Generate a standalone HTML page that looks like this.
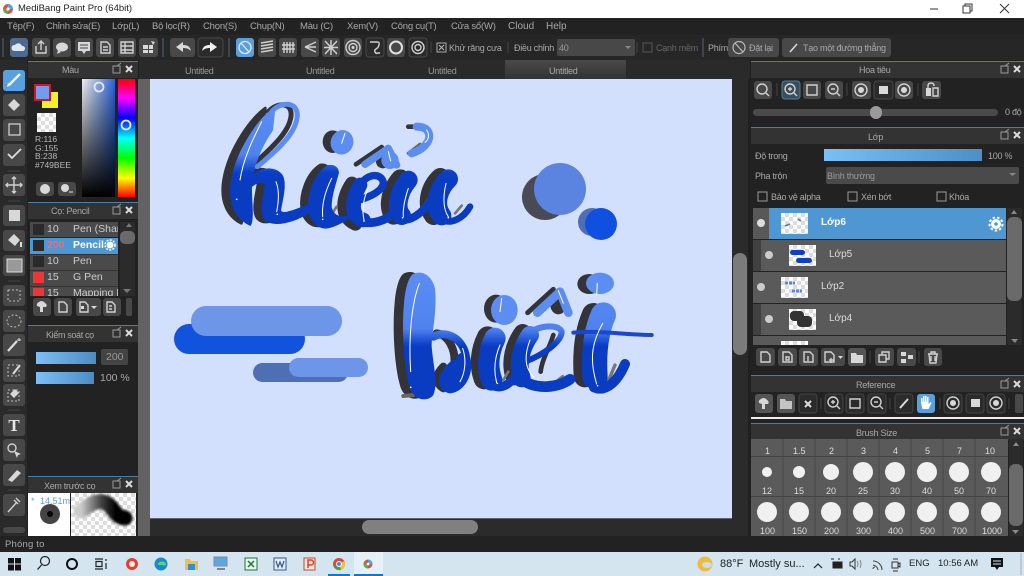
<!DOCTYPE html>
<html><head><meta charset="utf-8"><title>MediBang Paint Pro</title>
<style>
html,body{margin:0;padding:0;width:1024px;height:576px;overflow:hidden;background:#222}
body{position:relative;font-family:"Liberation Sans","Noto Sans CJK JP",sans-serif}
div{position:absolute}
.t{white-space:nowrap;font-size:9px;letter-spacing:-.25px;line-height:12px;color:#a8a8a8}
.m{font-size:9.5px;letter-spacing:-.2px;top:21px}
.n{font-size:9px;letter-spacing:0;color:#ddd}
.c{background-color:#fff;background-image:linear-gradient(45deg,#ddd 25%,transparent 25%,transparent 75%,#ddd 75%),linear-gradient(45deg,#ddd 25%,transparent 25%,transparent 75%,#ddd 75%);background-size:8px 8px;background-position:0 0,4px 4px}
.h{background:#333;border-top:1px solid #4c7f99;height:16px}
.r{left:753px;width:253px;height:31px;background:#5a5a5a}
svg{position:absolute;left:0;top:0}
.b{fill:#484848}.d{fill:#2b2b2b;stroke:#444}.a{fill:#5aa0de}
.i{fill:none;stroke:#d0d0d0;stroke-width:1.4}.f{fill:#d8d8d8}
</style></head><body>
<div style="left:0;top:0;width:1024px;height:18px;background:#fff"></div>
<div style="left:0;top:18px;width:1024px;height:17px;background:#222"></div>
<div style="left:0;top:35px;width:1024px;height:25px;background:#262626"></div>
<div style="left:0;top:60px;width:1024px;height:476px;background:#202020"></div>
<div style="left:139px;top:60px;width:611px;height:19px;background:#2a2a2a"></div>
<div style="left:505px;top:60px;width:121px;height:19px;background:linear-gradient(#4a4a4a,#333)"></div>
<div style="left:138px;top:79px;width:610px;height:457px;background:#626262"></div>
<div style="left:150px;top:79px;width:582px;height:439px;background:#d3e0fd"></div>
<div style="left:732px;top:79px;width:16px;height:441px;background:#2b2b2b"></div>
<div style="left:733px;top:253px;width:14px;height:102px;background:#7b7b7b;border-radius:7px"></div>
<div style="left:150px;top:519px;width:598px;height:17px;background:#2b2b2b"></div>
<div style="left:362px;top:520px;width:116px;height:14px;background:#808080;border-radius:7px"></div>
<div style="left:0;top:536px;width:1024px;height:16px;background:#222"></div>
<div style="left:0;top:552px;width:1024px;height:24px;background:#d4e5f0"></div>
<div style="left:354px;top:552px;width:29px;height:24px;background:#e6f1f7"></div>
<div style="left:328px;top:574px;width:22px;height:2px;background:#0a78d4"></div>
<div style="left:354px;top:574px;width:29px;height:2px;background:#0a78d4"></div>

<!-- left panels -->
<div style="left:0;top:60px;width:27px;height:476px;background:#2a2a2a"></div>
<div style="left:28px;top:61px;width:110px;height:475px;background:#222"></div>
<div class="h" style="left:28px;top:61px;width:110px"></div>
<div class="h" style="left:28px;top:202px;width:110px"></div>
<div class="h" style="left:28px;top:325px;width:110px"></div>
<div class="h" style="left:28px;top:476px;width:110px"></div>
<div style="left:82px;top:79px;width:33px;height:118px;background:linear-gradient(#0000 0,#000 100%),linear-gradient(90deg,#eee,#2a63d8)"></div>
<div style="left:118px;top:79px;width:17px;height:118px;background:linear-gradient(#f00,#f0f 16%,#00f 33%,#0ff 50%,#0f0 67%,#ff0 84%,#f00)"></div>
<div style="left:42px;top:92px;width:16px;height:16px;background:#f2f22a"></div>
<div style="left:34px;top:84px;width:13px;height:13px;background:#749bee;border:2px solid #d01820"></div>
<div class="c" style="left:37px;top:113px;width:19px;height:19px"></div>
<div style="left:30px;top:222px;width:88px;height:74px;overflow:hidden;background:#4a4a4a">
 <div style="left:0;top:16px;width:88px;height:16px;background:#4f97d3"></div>
 <div style="left:0;top:15px;width:88px;height:1px;background:#222"></div>
 <div style="left:0;top:32px;width:88px;height:1px;background:#333"></div>
 <div style="left:0;top:48px;width:88px;height:1px;background:#333"></div>
 <div style="left:0;top:64px;width:88px;height:1px;background:#333"></div>
 <div style="left:3px;top:2px;width:11px;height:11px;background:#2a2a2a"></div>
 <div style="left:3px;top:18px;width:11px;height:11px;background:#2a2a2a"></div>
 <div style="left:3px;top:34px;width:11px;height:11px;background:#2a2a2a"></div>
 <div style="left:3px;top:50px;width:11px;height:11px;background:#f03535"></div>
 <div style="left:3px;top:66px;width:11px;height:11px;background:#f03535"></div>
 <div class="t" style="left:17px;top:1px;color:#ccc;font-size:10.5px;letter-spacing:0">10</div>
 <div class="t" style="left:17px;top:17px;color:#f06a7a;font-size:10.5px;font-weight:bold;letter-spacing:0">200</div>
 <div class="t" style="left:17px;top:33px;color:#ccc;font-size:10.5px;letter-spacing:0">10</div>
 <div class="t" style="left:17px;top:49px;color:#ccc;font-size:10.5px;letter-spacing:0">15</div>
 <div class="t" style="left:17px;top:65px;color:#ccc;font-size:10.5px;letter-spacing:0">15</div>
 <div class="t" style="left:43px;top:1px;color:#ccc;font-size:10.5px;letter-spacing:0">Pen (Sharp)</div>
 <div class="t" style="left:43px;top:17px;color:#fff;font-size:10.5px;font-weight:bold;letter-spacing:0">Pencil</div>
 <div class="t" style="left:43px;top:33px;color:#ccc;font-size:10.5px;letter-spacing:0">Pen</div>
 <div class="t" style="left:43px;top:49px;color:#ccc;font-size:10.5px;letter-spacing:0">G Pen</div>
 <div class="t" style="left:43px;top:65px;color:#ccc;font-size:10.5px;letter-spacing:0">Mapping Pen</div>
</div>
<div style="left:120px;top:222px;width:15px;height:74px;background:#2b2b2b"></div>
<div style="left:120px;top:231px;width:15px;height:13px;background:#6a6a6a;border-radius:5px"></div>
<div style="left:36px;top:352px;width:60px;height:12px;background:linear-gradient(90deg,#7cc0f5,#4b8cc4)"></div>
<div style="left:101px;top:349px;width:27px;height:16px;background:#444;border-radius:2px"></div>
<div style="left:36px;top:372px;width:58px;height:12px;background:linear-gradient(90deg,#7cc0f5,#4b8cc4)"></div>
<div style="left:28px;top:493px;width:42px;height:43px;background:#fff"></div>
<div class="c" style="left:71px;top:493px;width:65px;height:43px"></div>

<!-- right panels -->
<div style="left:751px;top:61px;width:273px;height:475px;background:#222"></div>
<div class="h" style="left:751px;top:61px;width:273px"></div>
<div class="h" style="left:751px;top:127px;width:273px"></div>
<div class="h" style="left:751px;top:375px;width:273px"></div>
<div style="left:751px;top:417px;width:273px;height:2px;background:#eee"></div>
<div class="h" style="left:751px;top:423px;width:273px"></div>
<div style="left:753px;top:109px;width:245px;height:7px;background:#4a4a4a;border-radius:4px"></div>
<div style="left:870px;top:106px;width:12px;height:13px;background:#9a9a9a;border-radius:6px"></div>
<div style="left:824px;top:149px;width:158px;height:12px;background:linear-gradient(90deg,#78c0f6,#4b8fca)"></div>
<div style="left:826px;top:167px;width:193px;height:17px;background:#4a4a4a;border-radius:2px"></div>
<div class="r" style="top:208px;background:#4f97d3"></div>
<div style="left:753px;top:208px;width:16px;height:31px;background:#585858"></div>
<div class="r" style="top:240px"></div><div style="left:753px;top:240px;width:8px;height:31px;background:#404040"></div>
<div class="r" style="top:272px"></div>
<div class="r" style="top:304px"></div><div style="left:753px;top:304px;width:8px;height:31px;background:#404040"></div>
<div class="r" style="top:336px;height:9px"></div>
<div class="c" style="left:781px;top:213px;width:27px;height:21px"></div>
<div class="c" style="left:789px;top:245px;width:27px;height:21px"></div>
<div class="c" style="left:781px;top:277px;width:27px;height:21px"></div>
<div class="c" style="left:789px;top:309px;width:27px;height:21px"></div>
<div class="c" style="left:781px;top:341px;width:27px;height:4px"></div>
<div style="left:1007px;top:208px;width:15px;height:137px;background:#2b2b2b"></div>
<div style="left:1007px;top:217px;width:15px;height:84px;background:#6a6a6a;border-radius:6px"></div>
<div style="left:751px;top:439px;width:257px;height:97px;background:#5a5a5a"></div>
<div style="left:1009px;top:439px;width:14px;height:97px;background:#2b2b2b"></div>
<div style="left:1009px;top:464px;width:14px;height:62px;background:#6a6a6a;border-radius:6px"></div>

<svg width="1024" height="576" viewBox="0 0 1024 576">
<defs>
<linearGradient id="g1" gradientUnits="userSpaceOnUse" x1="0" y1="60" x2="0" y2="285"><stop offset="0" stop-color="#5c8df4"/><stop offset=".66" stop-color="#5083ee"/><stop offset=".9" stop-color="#0a3ec6"/><stop offset="1" stop-color="#0a3cc2"/></linearGradient>
<linearGradient id="g2" gradientUnits="userSpaceOnUse" x1="0" y1="40" x2="0" y2="265"><stop offset="0" stop-color="#5c8df4"/><stop offset=".74" stop-color="#4f82ee"/><stop offset=".96" stop-color="#0a3ec6"/><stop offset="1" stop-color="#0a3cc2"/></linearGradient>
<linearGradient id="st" x1="0" x2="1"><stop offset="0" stop-color="#ccc"/><stop offset=".45" stop-color="#444"/><stop offset=".8" stop-color="#000"/></linearGradient>
<filter id="sf" x="-40%" y="-150%" width="180%" height="400%"><feGaussianBlur stdDeviation="1.200"/></filter>
</defs>
<!-- title icon -->
<circle cx="8" cy="9" r="5" fill="#e0503a"/><path d="M8 4a5 5 0 0 1 5 5H8z" fill="#4aa8e0"/><path d="M3 9a5 5 0 0 0 5 5V9z" fill="#50b050"/><circle cx="8" cy="9" r="1.6" fill="#fff"/>
<path d="M930 9h8" stroke="#333" fill="none"/><path d="M963 6h7v7h-7zM965 6V4h7v7h-2" stroke="#333" fill="none"/><path d="M1000 4l9 9M1009 4l-9 9" stroke="#333" fill="none"/>
<!-- toolbar -->
<path d="M3 38v19M163 38v19M229 38v19M703 38v19" stroke="#456a80"/>
<rect x="10" y="38" width="18" height="19" rx="3" fill="#4a6a90"/><path d="M14 51a3 3 0 0 1 1-6 4 4 0 0 1 7 1 2.5 2.5 0 0 1 1 5z" fill="#dfe8f2"/>
<rect class="b" x="32" y="38" width="18" height="19" rx="3"/><path class="i" d="M36 46v7h10v-7M41 50v-9M38 44l3-3 3 3"/>
<rect class="b" x="53" y="38" width="18" height="19" rx="3"/><ellipse class="f" cx="62" cy="47" rx="6" ry="4.5"/><path class="f" d="M58 50l-1 4 4-2z"/>
<rect class="b" x="75" y="38" width="18" height="19" rx="3"/><path class="f" d="M78 42h12v9h-4l-2 3-2-3h-4z"/><path d="M80 45h8M80 48h8" stroke="#444"/>
<rect class="b" x="96" y="38" width="18" height="19" rx="3"/><path class="i" d="M101 42h6l3 3v8h-9zM103 47h5M103 50h5"/>
<rect class="b" x="118" y="38" width="18" height="19" rx="3"/><path class="i" d="M121 42h12v11h-12zM121 46h12M121 50h12M125 42v11"/>
<rect class="b" x="139" y="38" width="19" height="19" rx="3"/><path class="f" d="M143 45h5v4h-5zM149 45h4v4h-4zM143 50h5v3h-5zM149 50h4v3h-4zM151 41l4 1-2 3z"/>
<rect class="b" x="170" y="38" width="25" height="19" rx="3"/><path class="f" d="M176 47l7-5v3c4 0 7 1 8 6-2-2-4-3-8-3v4z"/>
<rect x="198" y="38" width="25" height="19" rx="3" fill="#2b2b2b" stroke="#484848"/><path fill="#f0f0f0" d="M217 47l-7-5v3c-4 0-7 1-8 6 2-2 4-3 8-3v4z"/>
<rect class="a" x="236" y="38" width="18" height="19" rx="3"/><circle cx="245" cy="47.5" r="6" fill="none" stroke="#dcecf8" stroke-width="1.3"/><path d="M241 43l8 9" stroke="#dcecf8" stroke-width="1.3"/>
<rect class="b" x="258" y="38" width="18" height="19" rx="3"/><path class="i" stroke-width="1" d="M261 43l12-2M261 46l12-2M261 49l12-2M261 52l12-2"/>
<rect class="b" x="279" y="38" width="18" height="19" rx="3"/><path class="i" d="M284 42v11M287 42v11M290 42v11M293 42v11M282 45h13M282 49h13"/>
<rect class="b" x="301" y="38" width="18" height="19" rx="3"/><path class="i" d="M305 47l11-5M305 47l11 0M305 47l11 5"/>
<rect class="b" x="322" y="38" width="18" height="19" rx="3"/><path class="i" d="M325 41l12 13M337 41l-12 13M331 40v15M324 47.500h14"/>
<rect class="b" x="344" y="38" width="18" height="19" rx="3"/><circle class="i" cx="353" cy="47.500" r="7"/><circle class="i" cx="353" cy="47.500" r="4"/><circle class="f" cx="353" cy="47.500" r="1.500"/>
<rect x="366" y="38" width="18" height="19" rx="3" fill="#2b2b2b" stroke="#484848"/><path class="i" d="M370 42h7q3 0 2 3t-3 4-1 3 3 1h2"/>
<rect class="b" x="387" y="38" width="18" height="19" rx="3"/><circle cx="396" cy="47.500" r="6" fill="none" stroke="#e0e0e0" stroke-width="2"/>
<rect x="409" y="38" width="18" height="19" rx="3" fill="#2b2b2b" stroke="#484848"/><circle class="i" cx="418" cy="47.500" r="6"/><circle class="i" cx="418" cy="47.500" r="3"/>
<path d="M431 42v11M508 42v11M637 42v11" stroke="#444"/>
<rect x="437" y="43" width="9" height="9" fill="none" stroke="#aaa"/><path d="M439 45l5 5M444 45l-5 5" stroke="#bbb"/>
<rect x="557" y="39" width="78" height="17" rx="2" fill="#484848"/><path d="M625 46h6l-3 3z" fill="#888"/>
<rect x="643" y="43" width="9" height="9" fill="none" stroke="#555"/>
<rect class="b" x="728" y="38" width="51" height="19" rx="3"/><circle cx="739" cy="47.500" r="6" fill="none" stroke="#bbb" stroke-width="1.200"/><path d="M735 43l8 9" stroke="#bbb" stroke-width="1.200"/>
<rect class="b" x="782" y="38" width="109" height="19" rx="3"/><path d="M790 52l7-8" stroke="#ddd" stroke-width="1.500"/>
<!-- left tools -->
<rect class="a" x="3" y="70" width="22" height="21" rx="3"/><path d="M9 85l11-11" stroke="#eaf3fb" stroke-width="2.500"/><path d="M7 87l1-4 3 2z" fill="#eaf3fb"/>
<rect class="b" x="3" y="94" width="22" height="22" rx="3"/><path class="f" d="M8 105l6-6 6 6-6 6z"/>
<rect class="b" x="3" y="119" width="22" height="22" rx="3"/><rect x="9" y="124" width="11" height="11" fill="none" stroke="#bbb" stroke-width="1.500"/>
<rect class="b" x="3" y="144" width="22" height="22" rx="3"/><path d="M8 154l4 4 9-9" fill="none" stroke="#ddd" stroke-width="1.800"/>
<rect class="b" x="3" y="174" width="22" height="22" rx="3"/><path class="i" d="M14 177v16M6 185h16M12 179l2-2 2 2M12 191l2 2 2-2M8 183l-2 2 2 2M20 183l2 2-2 2"/>
<rect class="b" x="3" y="205" width="22" height="21" rx="3"/><rect class="f" x="9" y="210" width="11" height="11"/>
<rect class="b" x="3" y="230" width="22" height="21" rx="3"/><path class="f" d="M8 240l6-6 6 6-5 6z"/><path d="M21 242v5" stroke="#ddd" stroke-width="2"/>
<rect class="b" x="3" y="255" width="22" height="21" rx="3"/><rect x="7" y="259" width="15" height="13" fill="#999" stroke="#ddd"/>
<rect class="b" x="3" y="285" width="22" height="21" rx="3"/><rect x="8" y="290" width="12" height="11" fill="none" stroke="#bbb" stroke-dasharray="2 2"/>
<rect class="b" x="3" y="310" width="22" height="22" rx="3"/><ellipse cx="14" cy="321" rx="7" ry="6" fill="none" stroke="#bbb" stroke-dasharray="2 2"/>
<rect class="b" x="3" y="334" width="22" height="22" rx="3"/><path d="M8 351l9-10" stroke="#ddd" stroke-width="2.200"/><path d="M19 338v3M17 340h4" stroke="#ddd"/>
<rect class="b" x="3" y="359" width="22" height="23" rx="3"/><rect x="8" y="365" width="11" height="11" fill="none" stroke="#bbb" stroke-dasharray="2 2"/><path d="M13 374l7-9" stroke="#ddd" stroke-width="2"/>
<rect class="b" x="3" y="384" width="22" height="22" rx="3"/><rect x="8" y="390" width="11" height="11" fill="none" stroke="#bbb" stroke-dasharray="2 2"/><path class="f" d="M10 394l5-5 4 4-5 5z"/>
<rect class="b" x="3" y="414" width="22" height="22" rx="3"/>
<rect class="b" x="3" y="439" width="22" height="22" rx="3"/><circle class="i" cx="12" cy="448" r="4"/><path class="f" d="M14 451l7 3-3 1-1 3z"/>
<rect class="b" x="3" y="464" width="22" height="22" rx="3"/><path class="f" d="M8 480l9-10 4 3-9 9z"/>
<rect class="b" x="3" y="494" width="22" height="22" rx="3"/><path class="i" d="M8 512l9-10M16 498l4 4M14 500l4 4"/>
<rect class="b" x="3" y="527" width="22" height="6" rx="3"/>
<path d="M8 171h12M8 201h12M8 281h12M8 410h12M8 490h12" stroke="#444"/>
<!-- panel head icons -->
<g fill="none" stroke="#999"><path d="M113 66h7v7h-7zM117 66l4-3"/><path d="M113 207h7v7h-7zM117 207l4-3"/><path d="M113 330h7v7h-7zM117 330l4-3"/><path d="M113 481h7v7h-7zM117 481l4-3"/><path d="M1001 66h7v7h-7zM1005 66l4-3"/><path d="M1001 132h7v7h-7zM1005 132l4-3"/><path d="M1001 381h7v7h-7zM1005 381l4-3"/><path d="M1001 428h7v7h-7zM1005 428l4-3"/></g>
<g stroke="#ddd" stroke-width="2"><path d="M126 66l6 6M132 66l-6 6M126 207l6 6M132 207l-6 6M126 330l6 6M132 330l-6 6M126 481l6 6M132 481l-6 6M1014 66l6 6M1020 66l-6 6M1014 132l6 6M1020 132l-6 6M1014 381l6 6M1020 381l-6 6M1014 428l6 6M1020 428l-6 6"/></g>
<!-- color panel marks -->
<circle cx="99" cy="87" r="4.500" fill="none" stroke="#e8e8e8" stroke-width="1.800"/>
<circle cx="126" cy="125" r="4.500" fill="none" stroke="#eee" stroke-width="1.800"/>
<rect class="b" x="36" y="182" width="18" height="14" rx="3"/><circle class="f" cx="45" cy="189" r="5"/>
<rect class="b" x="58" y="182" width="18" height="14" rx="3"/><circle class="f" cx="65" cy="188" r="4"/><path d="M69 192h4" stroke="#ddd"/>
<!-- brush list -->
<circle cx="110" cy="245" r="3.500" fill="#fff"/><circle cx="110" cy="245" r="5" fill="none" stroke="#fff" stroke-dasharray="2 1.300" stroke-width="1.500"/>
<path d="M127 227l3-4 3 4zM124 289h8l-4 4z" fill="#777" transform="translate(-1 0)"/>
<rect class="b" x="33" y="298" width="18" height="18" rx="3"/><path class="f" d="M37 306a3 3 0 0 1 2-4 4 4 0 0 1 6 1 2.500 2.500 0 0 1 1 4h-3v5h-3v-5z"/>
<rect class="b" x="54" y="298" width="18" height="18" rx="3"/><path class="i" d="M59 302h5l3 3v7h-8z"/>
<rect class="b" x="76" y="298" width="25" height="18" rx="3"/><path class="i" d="M80 302h5l3 3v7h-8z"/><path class="f" d="M81 306h3v3h-3zM91 306h6l-3 3z"/>
<rect class="b" x="103" y="298" width="18" height="18" rx="3"/><path class="i" d="M107 302h5l3 3v7h-8zM109 306h3M109 309h3"/>
<rect class="b" x="126" y="298" width="6" height="18" rx="2"/>
<!-- preview -->
<circle cx="50" cy="514" r="10" fill="#444"/><circle cx="50" cy="514" r="3" fill="#000"/>
<path d="M81 511C90 504 98 499 106 503C114 507 114 517 125 518" fill="none" stroke="url(#st)" stroke-width="15" stroke-linecap="round" filter="url(#sf)"/>
<!-- art: bars -->
<rect x="253" y="363" width="95" height="19" rx="9.500" fill="#4e6fb3"/>
<rect x="174" y="324" width="131" height="30" rx="15" fill="#1253dd"/>
<rect x="191" y="306" width="151" height="30" rx="15" fill="#6d95e8"/>
<rect x="289" y="358" width="79" height="19" rx="9.500" fill="#6d95e8"/>
<!-- art: circles -->
<circle cx="545" cy="197" r="23" fill="#4a4a55"/><circle cx="560" cy="189" r="26" fill="#5b84e0"/>
<circle cx="592" cy="222" r="14" fill="#4f6fb5"/><circle cx="601" cy="224" r="16" fill="#1050e0"/>

<!-- hieu (zoomed coordinates) -->
<g transform="translate(200 85) scale(.33333)" fill="none" stroke-linecap="round" stroke-linejoin="round">
 <g stroke="#333338" fill="#333338">
  <g transform="translate(-26 -3)" stroke-width="8">
   <path d="M222 72C170 110 105 210 95 300C90 350 105 395 150 418C160 395 150 340 152 300C158 240 180 185 215 135Z"/>
   <path d="M150 285C180 250 225 245 245 275C255 300 245 340 238 375C238 395 250 400 255 405C225 420 210 415 200 405C180 385 195 330 200 300C195 285 175 285 155 300Z"/>
  </g>
  <path fill="none" stroke-width="15" d="M205 80C235 48 282 52 272 100C262 150 205 195 165 235"/>
  <g transform="translate(-24 -4)">
   <path stroke-width="10" d="M385 245C345 270 325 330 330 375C335 410 360 430 385 425C395 405 390 385 390 365C390 330 405 290 412 262C410 248 398 243 385 245Z"/>
   <path fill="none" stroke-width="42" d="M480 300C450 345 445 400 490 420"/>
   <path fill="none" stroke-width="56" d="M625 285C595 320 585 370 605 395"/>
   <path fill="none" stroke-width="58" d="M745 282C715 310 700 360 725 395"/>
  </g>
  <ellipse stroke="none" cx="398" cy="170" rx="30" ry="34"/>
  <path fill="none" stroke-width="14" d="M468 238L545 186"/>
  <circle stroke="none" cx="548" cy="230" r="20"/>
  <path fill="none" stroke-width="14" d="M625 125H655"/>
  <path fill="none" stroke-width="10" stroke="#666" d="M660 178L625 205"/>
  <path fill="none" stroke-width="10" stroke="#666" d="M685 345L655 385"/>
  <path fill="none" stroke-width="8" stroke="#777" d="M785 362L765 385"/>
  <path fill="none" stroke-width="8" stroke="#777" d="M410 365L390 395"/>
 </g>
 <g stroke="url(#g1)" fill="url(#g1)">
  <path stroke-width="8" d="M222 72C170 110 105 210 95 300C90 350 105 395 150 418C160 395 150 340 152 300C158 240 180 185 215 135Z"/>
  <path fill="none" stroke-width="15" stroke="#5c8df4" d="M215 80C245 45 303 50 290 105C280 155 220 205 172 245"/>
  <path stroke-width="10" d="M150 285C180 250 225 245 245 275C255 300 245 340 238 375C240 395 270 385 320 365L325 380C280 410 225 420 200 405C180 385 195 330 200 300C195 285 175 285 155 300Z"/>
  <path stroke-width="10" d="M385 245C345 270 325 330 330 375C335 410 360 430 385 425C420 415 450 395 470 372L470 385C430 410 395 400 390 365C390 330 405 290 412 262C410 248 398 243 385 245Z"/>
  <path fill="none" stroke-width="22" d="M450 350C495 345 550 320 550 292C545 265 505 262 480 300"/>
  <path fill="none" stroke-width="44" d="M480 300C455 345 450 395 490 405"/>
  <path fill="none" stroke-width="26" d="M490 412C520 418 555 405 575 390"/>
  <path fill="none" stroke-width="56" d="M625 285C595 320 585 370 605 392"/>
  <path fill="none" stroke-width="24" d="M610 405C645 405 680 370 705 330"/>
  <path fill="none" stroke-width="58" d="M745 282C715 310 700 360 725 392"/>
  <path fill="none" stroke-width="20" d="M725 405C755 418 790 400 810 365"/>
 </g>
 <ellipse cx="426" cy="172" rx="34" ry="37" fill="#5c8df0" transform="rotate(20 426 172)"/>
 <path fill="none" stroke="#5c8df0" stroke-width="22" d="M495 238L565 190L590 240"/>
 <circle cx="570" cy="226" r="26" fill="#5c8df0"/>
 <path stroke-width="24" stroke="#5c8df0" d="M650 125C690 125 695 155 680 175C670 190 650 200 635 205"/>
 <g stroke="#fff" stroke-width="3">
  <path d="M185 110C160 160 130 220 120 285"/><path d="M228 290C240 320 235 355 230 380"/><path d="M395 280C375 320 365 360 368 395"/><path d="M435 145L425 175"/><path d="M565 200L572 228"/><path d="M625 310C615 340 608 370 610 395"/><path d="M738 295C730 330 728 370 745 395"/><path d="M680 135C690 150 685 165 675 172"/><path d="M505 310C490 340 485 375 492 405"/>
 </g>
 <g fill="#fff"><circle cx="110" cy="343" r="2.500"/><circle cx="232" cy="388" r="2.500"/><circle cx="368" cy="403" r="2.500"/><circle cx="492" cy="408" r="2.500"/><circle cx="608" cy="398" r="2.500"/><circle cx="745" cy="398" r="2.500"/></g>
</g>

<!-- biet (zoomed coordinates) -->
<g transform="translate(380 260) scale(.33333)" fill="none" stroke-linecap="round" stroke-linejoin="round">
 <g stroke="#333338" fill="#333338">
  <path stroke="none" transform="translate(-28 -2)" d="M100 42C125 30 155 45 165 85C172 150 155 220 155 260C160 320 175 370 160 405C145 425 105 425 90 385C70 320 65 200 72 130C75 90 85 50 100 42Z"/>
  <path fill="none" stroke-width="24" d="M170 220C205 225 230 270 222 320C218 350 210 365 205 372"/>
  <path fill="none" stroke-width="24" d="M190 320C170 340 160 365 190 385"/>
  <path fill="none" stroke-width="64" transform="translate(-22 -4)" d="M345 235C325 275 320 320 335 360"/>
  <ellipse stroke="none" cx="348" cy="146" rx="36" ry="42"/>
  <path fill="none" stroke-width="15" d="M443 158L520 88"/>
  <ellipse stroke="none" cx="535" cy="135" rx="24" ry="28"/>
  <path fill="none" stroke-width="54" transform="translate(-22 -6)" d="M450 225C425 260 410 310 425 355"/>
  <path fill="none" stroke-width="14" d="M520 225C510 260 485 300 482 335"/>
  <ellipse stroke="none" cx="628" cy="72" rx="36" ry="30"/>
  <path fill="none" stroke-width="68" transform="translate(-25 -2)" d="M665 165C645 210 635 270 640 350"/>
  <path fill="none" stroke-width="10" stroke="#777" d="M548 350L520 372"/>
  <path fill="none" stroke-width="10" stroke="#777" d="M705 315L680 375"/>
  <path fill="none" stroke-width="12" stroke="#666" d="M100 405L70 408"/>
  <path fill="none" stroke-width="8" stroke="#777" d="M385 335L370 360"/>
 </g>
 <g stroke="url(#g2)" fill="url(#g2)">
  <path stroke="none" d="M100 42C125 30 155 45 165 85C172 150 155 220 155 260C160 320 175 370 160 405C145 425 105 425 90 385C70 320 65 200 72 130C75 90 85 50 100 42Z"/>
  <path fill="none" stroke-width="24" d="M160 230C205 208 250 240 258 290"/>
  <path fill="none" stroke-width="44" d="M250 300C258 340 235 375 210 378C190 370 200 345 225 322"/>
  <path fill="none" stroke-width="64" d="M345 235C325 275 320 320 335 360"/>
  <path fill="none" stroke-width="26" d="M340 378C370 390 395 365 410 345"/>
  <path fill="none" stroke-width="54" d="M450 225C425 260 410 310 425 355"/>
  <path fill="none" stroke-width="18" d="M440 225C470 195 535 190 545 215C545 245 490 285 435 305"/>
  <path fill="none" stroke-width="32" d="M430 362C470 388 530 385 570 358"/>
  <path fill="none" stroke-width="76" d="M670 165C650 210 640 270 645 350"/>
  <path fill="none" stroke-width="30" d="M642 382C680 398 715 360 735 312"/>
  <path fill="none" stroke-width="12" stroke="#1848cc" d="M580 218C650 210 740 225 815 225"/>
 </g>
 <ellipse cx="373" cy="150" rx="40" ry="45" fill="#5c8df0"/>
 <path stroke-width="26" stroke="#5c8df0" d="M472 158L540 95L565 158"/>
 <ellipse cx="660" cy="70" rx="42" ry="32" fill="#5c8df0"/>
 <g stroke="#fff" stroke-width="3">
  <path d="M118 70C95 130 85 230 92 335"/><path d="M365 115L360 155"/><path d="M535 92L550 130"/><path d="M652 70L650 105"/><path d="M360 255C345 290 340 330 350 368"/><path d="M248 265C260 300 255 340 240 365"/><path d="M450 240C435 280 430 320 462 352"/><path d="M668 190C640 240 625 290 650 372"/>
 </g>
 <g fill="#fff"><circle cx="92" cy="382" r="2.500"/><circle cx="352" cy="370" r="2.500"/><circle cx="473" cy="358" r="2.500"/><circle cx="653" cy="377" r="2.500"/></g>
</g>

<!-- navigator -->
<rect class="b" x="754" y="81" width="18" height="18" rx="3"/><circle class="i" cx="762" cy="89" r="5"/><path class="i" d="M766 93l3 3"/>
<rect x="782" y="81" width="18" height="18" rx="3" fill="#3a4d5c" stroke="#4c7f99"/><circle class="i" cx="790" cy="89" r="5"/><path class="i" d="M794 93l3 3M788 89h4M790 87v4"/>
<rect class="b" x="803" y="81" width="18" height="18" rx="3"/><path class="i" d="M807 85h10v10h-10z"/>
<rect class="b" x="825" y="81" width="18" height="18" rx="3"/><circle class="i" cx="833" cy="89" r="5"/><path class="i" d="M837 93l3 3M831 89h4"/>
<rect class="b" x="852" y="81" width="19" height="18" rx="3"/><circle class="i" cx="861" cy="90" r="6"/><circle class="f" cx="861" cy="90" r="3"/>
<rect x="874" y="81" width="19" height="18" rx="3" fill="#2b2b2b" stroke="#484848"/><rect class="f" x="879" y="86" width="9" height="8"/>
<rect class="b" x="895" y="81" width="18" height="18" rx="3"/><circle class="i" cx="904" cy="90" r="6"/><circle class="f" cx="904" cy="90" r="3"/>
<rect class="b" x="922" y="81" width="19" height="18" rx="3"/><path class="f" d="M926 88h5v8h-5z"/><path class="i" d="M933 88h5v8h-5zM928 88v-2q0-3 3-3t3 3"/>
<path d="M777 83v13M847 83v13M918 83v13" stroke="#444"/>
<!-- layer panel -->
<path d="M1009 173h7l-3.500 3z" fill="#888"/>
<rect x="758" y="192" width="9" height="9" fill="none" stroke="#999"/><rect x="848" y="192" width="9" height="9" fill="none" stroke="#999"/><rect x="937" y="192" width="9" height="9" fill="none" stroke="#999"/>
<circle cx="761" cy="223" r="4" fill="#ddd"/><circle cx="769" cy="255" r="4" fill="#ccc"/><circle cx="761" cy="287" r="4" fill="#ccc"/><circle cx="769" cy="319" r="4" fill="#ccc"/>
<circle cx="996" cy="224" r="5" fill="#fff"/><circle cx="996" cy="224" r="6.500" fill="none" stroke="#fff" stroke-width="2" stroke-dasharray="2.500 2"/><circle cx="996" cy="224" r="1.800" fill="#4f97d3"/>
<path d="M785 226l5-2M798 219l3 2" stroke="#4f74d0" stroke-width="1.500"/>
<rect x="790" y="250" width="15" height="5" rx="2.500" fill="#1040c0"/><rect x="796" y="258" width="16" height="5" rx="2.500" fill="#1040c0"/>
<path d="M785 283h10M792 291h10" stroke="#5b84e0" stroke-width="3" stroke-dasharray="3 1"/>
<rect x="790" y="311" width="14" height="10" rx="4" fill="#333"/><rect x="797" y="316" width="15" height="11" rx="4" fill="#333"/>
<path d="M1011 214l3-4 3 4zM1011 339h7l-3 4z" fill="#888"/>
<rect class="b" x="756" y="348" width="19" height="18" rx="3"/><path class="i" d="M761 352h6l3 3v7h-9z"/>
<rect class="b" x="778" y="348" width="19" height="18" rx="3"/><path class="i" d="M783 352h6l3 3v7h-9zM786 357h3v3h-3z"/>
<rect class="b" x="799" y="348" width="19" height="18" rx="3"/><path class="i" d="M804 352h6l3 3v7h-9zM808 356v5"/>
<rect class="b" x="821" y="348" width="24" height="18" rx="3"/><path class="i" d="M825 352h6l3 3v7h-9zM829 360h5M831 358v5"/><path class="f" d="M838 356h5l-2.500 3z"/>
<rect x="848" y="348" width="18" height="18" rx="3" fill="#555"/><path class="f" d="M851 353h5l1 2h6v8h-12z"/>
<rect class="b" x="875" y="348" width="19" height="18" rx="3"/><path class="i" d="M879 355h7v7h-7zM882 355v-3h7v7h-3"/>
<rect class="b" x="897" y="348" width="19" height="18" rx="3"/><path class="f" d="M901 352h5v4h-5zM901 359h5v4h-5zM908 355h5v4h-5z"/>
<rect class="b" x="924" y="348" width="18" height="18" rx="3"/><path class="i" d="M928 354h10M929 354l1 9h6l1-9M931 356v5M935 356v5M931 354v-2h4v2"/>
<path d="M870 351v12M919 351v12" stroke="#444"/>
<!-- reference -->
<rect x="755" y="394" width="18" height="19" rx="3" fill="#555"/><path class="f" d="M759 403a3 3 0 0 1 2-4 4 4 0 0 1 6 1 2.500 2.500 0 0 1 1 4h-3v5h-3v-5z"/>
<rect x="777" y="394" width="18" height="19" rx="3" fill="#555"/><path class="f" d="M780 399h5l1 2h6v8h-12z" opacity=".85"/>
<rect x="799" y="394" width="18" height="19" rx="3" fill="#2b2b2b" stroke="#444"/><path d="M805 401l6 6M811 401l-6 6" stroke="#ddd" stroke-width="2"/>
<rect x="825" y="394" width="18" height="19" rx="3" fill="#2b2b2b" stroke="#444"/><circle class="i" cx="833" cy="402" r="5"/><path class="i" d="M837 406l3 3M831 402h4M833 400v4"/>
<rect x="846" y="394" width="18" height="19" rx="3" fill="#2b2b2b" stroke="#444"/><path class="i" d="M850 399h10v9h-10z"/>
<rect x="868" y="394" width="18" height="19" rx="3" fill="#2b2b2b" stroke="#444"/><circle class="i" cx="876" cy="402" r="5"/><path class="i" d="M880 406l3 3M874 402h4"/>
<rect x="895" y="394" width="18" height="19" rx="3" fill="#2b2b2b" stroke="#444"/><path d="M900 408l8-9" stroke="#ddd" stroke-width="2"/>
<rect class="a" x="917" y="394" width="18" height="19" rx="3"/><path fill="#fff" d="M921 403v-5h1.500v4h.5v-6h1.500v6h.5v-6h1.500v6h.5v-5h1.500v7l2-2 1 1-3 6h-6z"/>
<rect x="944" y="394" width="18" height="19" rx="3" fill="#2b2b2b" stroke="#444"/><circle class="i" cx="953" cy="403" r="6"/><circle class="f" cx="953" cy="403" r="3"/>
<rect x="966" y="394" width="18" height="19" rx="3" fill="#2b2b2b" stroke="#444"/><rect class="f" x="971" y="399" width="9" height="8"/>
<rect x="987" y="394" width="18" height="19" rx="3" fill="#2b2b2b" stroke="#444"/><circle class="i" cx="996" cy="403" r="6"/><circle class="f" cx="996" cy="403" r="3"/>
<rect class="b" x="1015" y="394" width="8" height="19" rx="2"/>
<path d="M821 398v11M890 398v11M940 398v11M1009 398v11" stroke="#444"/>
<!-- brush size grid -->
<path d="M783 439v97M815 439v97M847 439v97M879 439v97M911 439v97M943 439v97M975 439v97" stroke="#484848"/>
<path d="M751 456.500h257M751 496.500h257" stroke="#444"/>
<g fill="#f0f0f0"><circle cx="767" cy="472" r="5"/><circle cx="799" cy="472" r="6"/><circle cx="831" cy="472" r="8"/><circle cx="863" cy="472" r="10"/><circle cx="895" cy="472" r="10"/><circle cx="927" cy="472" r="10"/><circle cx="959" cy="472" r="10"/><circle cx="991" cy="472" r="10"/>
<circle cx="767" cy="512" r="10"/><circle cx="799" cy="512" r="10"/><circle cx="831" cy="512" r="10"/><circle cx="863" cy="512" r="10"/><circle cx="895" cy="512" r="10"/><circle cx="927" cy="512" r="10"/><circle cx="959" cy="512" r="10"/><circle cx="991" cy="512" r="10"/></g>
<path d="M1013 446l3-4 3 4zM1012 530h7l-3.500 4z" fill="#888"/>
<!-- taskbar -->
<path d="M8 558h6v5.500H8zM15 558h6v5.500h-6zM8 564.500h6v6H8zM15 564.500h6v6h-6z" fill="#111"/>
<circle cx="45" cy="561" r="4.500" fill="none" stroke="#222" stroke-width="1.200"/><path d="M41.500 565l-4 4.500" stroke="#222" stroke-width="1.300"/>
<circle cx="72" cy="564" r="5" fill="none" stroke="#111" stroke-width="2"/>
<path d="M95 559h8M95 569h8M96 561.500h6v5h-6zM106 559v2M106 563v6" stroke="#222" fill="none" stroke-width="1.200"/>
<circle cx="132" cy="564" r="6" fill="#e04030"/><circle cx="132" cy="564" r="3" fill="#f8e8d8"/>
<circle cx="161" cy="564" r="6.500" fill="#1a8ad0"/><path d="M158 565a4 3 0 0 1 8-1c0 2-3 2-3 1z" fill="#5fd07a"/>
<path d="M185 559h5l1 2h7v9h-13z" fill="#f0c040"/><path d="M188 564h7v6h-7z" fill="#3a8ad8"/>
<rect x="214" y="557" width="13" height="9" fill="#5aa8e0" stroke="#88a"/><path d="M217 569h8" stroke="#666" stroke-width="1.500"/>
<rect x="245" y="558" width="12" height="12" fill="#e8f4e8" stroke="#217346"/><path d="M248 561l6 6M254 561l-6 6" stroke="#217346" stroke-width="1.500"/>
<rect x="274" y="558" width="12" height="12" fill="#e8eef8" stroke="#2b579a"/><path d="M276 561l2 6 2-5 2 5 2-6" fill="none" stroke="#2b579a" stroke-width="1.200"/>
<rect x="304" y="558" width="11" height="12" fill="#f8e8e0" stroke="#d04423"/><path d="M308 568v-8h3a2 2 0 0 1 0 5h-3" fill="none" stroke="#d04423" stroke-width="1.500"/>
<circle cx="339" cy="564" r="6" fill="#e0453a"/><path d="M339 564l5-3a6 6 0 0 1-3 9z" fill="#f2c230"/><path d="M339 564l2 6a6 6 0 0 1-7-4z" fill="#43a047"/><circle cx="339" cy="564" r="2.500" fill="#4a8ae8" stroke="#fff"/>
<circle cx="368" cy="564" r="4.500" fill="#e0503a"/><path d="M368 559.500a4.500 4.500 0 0 1 4.500 4.500H368z" fill="#4aa8e0"/><path d="M363.500 564a4.500 4.500 0 0 0 4.500 4.500V564z" fill="#50b050"/><circle cx="368" cy="564" r="1.400" fill="#fff"/>
<circle cx="705" cy="564" r="7.500" fill="#f2b93b"/><ellipse cx="707" cy="565" rx="5" ry="3" fill="#c7dff2"/>
<path d="M814 568l4-4 4 4" fill="none" stroke="#222" stroke-width="1.200"/>
<path d="M833 562h9v6h-9zM831 559h3M838 559h2" fill="none" stroke="#222"/><rect x="833" y="562" width="9" height="6" fill="#222"/>
<path d="M850 562h2l3-3v10l-3-3h-2z" fill="none" stroke="#333"/><path d="M857 561q2 3 0 6M860 560q2 4 0 8" fill="none" stroke="#888"/>
<path d="M873 569a2 2 0 0 1 2-2M873 565a6 6 0 0 1 5 5M873 561a9 9 0 0 1 9 9" fill="none" stroke="#444" stroke-width="1.100"/>
<path d="M892 562h6v6h-6zM898 564l2-1v4l-2-1M893 559h5M893 571h5" fill="none" stroke="#333"/>
<path d="M991 558h12v9h-4l-2 3-2-3h-4z" fill="#111"/><path d="M993 561h8M993 564h8" stroke="#d4e5f0"/>
<path d="M1021 553v22" stroke="#aab"/>
</svg>

<!-- text -->
<div class="t" style="left:18px;top:3px;color:#222;font-size:9.5px;letter-spacing:0">MediBang Paint Pro (64bit)</div>
<div class="t m" style="left:7px">Tệp(F)</div>
<div class="t m" style="left:46px">Chỉnh sửa(E)</div>
<div class="t m" style="left:112px">Lớp(L)</div>
<div class="t m" style="left:152px">Bộ lọc(R)</div>
<div class="t m" style="left:203px">Chọn(S)</div>
<div class="t m" style="left:250px">Chụp(N)</div>
<div class="t m" style="left:300px">Màu (C)</div>
<div class="t m" style="left:347px">Xem(V)</div>
<div class="t m" style="left:391px">Công cụ(T)</div>
<div class="t m" style="left:451px">Cửa sổ(W)</div>
<div class="t" style="left:508px;top:21px;font-size:10px;letter-spacing:0">Cloud</div>
<div class="t" style="left:546px;top:21px;font-size:10px;letter-spacing:0">Help</div>
<div class="t" style="left:449px;top:42px">Khử răng cưa</div>
<div class="t" style="left:514px;top:42px">Điều chỉnh</div>
<div class="t" style="left:559px;top:42px;color:#999">40</div>
<div class="t" style="left:656px;top:42px;color:#666">Cạnh mềm</div>
<div class="t" style="left:708px;top:42px">Phím</div>
<div class="t" style="left:749px;top:42px">Đặt lại</div>
<div class="t" style="left:803px;top:42px">Tạo một đường thẳng</div>
<div class="t" style="left:185px;top:65px;color:#999">Untitled</div>
<div class="t" style="left:306px;top:65px;color:#999">Untitled</div>
<div class="t" style="left:428px;top:65px;color:#999">Untitled</div>
<div class="t" style="left:549px;top:65px;color:#aaa">Untitled</div>
<div class="t" style="left:62px;top:64px">Màu</div>
<div class="t" style="left:51px;top:205px">Cọ: Pencil</div>
<div class="t" style="left:46px;top:329px;letter-spacing:-.35px">Kiểm soát cọ</div>
<div class="t" style="left:44px;top:480px;letter-spacing:-.3px">Xem trước cọ</div>
<div class="t" style="left:35px;top:135px;font-size:8.500px;letter-spacing:0;line-height:8.700px;color:#b8b8b8">R:116<br>G:155<br>B:238<br>#749BEE</div>
<div class="t" style="left:106px;top:351px;font-size:10.500px;letter-spacing:0;color:#999">200</div>
<div class="t" style="left:100px;top:372px;font-size:10.500px;letter-spacing:0">100 %</div>
<div class="t" style="left:31px;top:495px;color:#5f9fd8">*</div>
<div style="left:28px;top:493px;width:42px;height:14px;overflow:hidden"><div class="t" style="left:12px;top:2px;letter-spacing:0;color:#5f9fd8">14.51mm</div></div>
<div class="t" style="left:5px;top:539px;font-size:9.500px;letter-spacing:.2px">Phóng to</div>
<div class="t" style="left:859px;top:64px">Hoa tiêu</div>
<div class="t" style="left:868px;top:131px">Lớp</div>
<div class="t" style="left:856px;top:379px">Reference</div>
<div class="t" style="left:856px;top:427px">Brush Size</div>
<div class="t" style="left:1005px;top:106px">0 độ</div>
<div class="t" style="left:755px;top:150px">Độ trong</div>
<div class="t" style="left:988px;top:150px">100 %</div>
<div class="t" style="left:755px;top:170px">Pha trộn</div>
<div class="t" style="left:827px;top:170px;color:#999">Bình thường</div>
<div class="t" style="left:771px;top:191px">Bảo vệ alpha</div>
<div class="t" style="left:861px;top:191px">Xén bớt</div>
<div class="t" style="left:949px;top:191px">Khóa</div>
<div class="t" style="left:821px;top:217px;color:#fff;font-weight:bold;font-size:10px;letter-spacing:0">Lớp6</div>
<div class="t" style="left:829px;top:249px;color:#ddd;font-size:10px;letter-spacing:0">Lớp5</div>
<div class="t" style="left:821px;top:281px;color:#ddd;font-size:10px;letter-spacing:0">Lớp2</div>
<div class="t" style="left:829px;top:313px;color:#ddd;font-size:10px;letter-spacing:0">Lớp4</div>
<div class="t n" style="left:765px;top:445px">1</div>
<div class="t n" style="left:793px;top:445px">1.5</div>
<div class="t n" style="left:829px;top:445px">2</div>
<div class="t n" style="left:861px;top:445px">3</div>
<div class="t n" style="left:893px;top:445px">4</div>
<div class="t n" style="left:925px;top:445px">5</div>
<div class="t n" style="left:957px;top:445px">7</div>
<div class="t n" style="left:985px;top:445px">10</div>
<div class="t n" style="left:762px;top:485px">12</div>
<div class="t n" style="left:794px;top:485px">15</div>
<div class="t n" style="left:826px;top:485px">20</div>
<div class="t n" style="left:858px;top:485px">25</div>
<div class="t n" style="left:890px;top:485px">30</div>
<div class="t n" style="left:922px;top:485px">40</div>
<div class="t n" style="left:954px;top:485px">50</div>
<div class="t n" style="left:986px;top:485px">70</div>
<div class="t n" style="left:760px;top:525px">100</div>
<div class="t n" style="left:792px;top:525px">150</div>
<div class="t n" style="left:824px;top:525px">200</div>
<div class="t n" style="left:856px;top:525px">300</div>
<div class="t n" style="left:888px;top:525px">400</div>
<div class="t n" style="left:920px;top:525px">500</div>
<div class="t n" style="left:952px;top:525px">700</div>
<div class="t n" style="left:982px;top:525px">1000</div>
<div class="t" style="left:720px;top:558px;color:#222;font-size:11px;letter-spacing:0">88°F</div>
<div class="t" style="left:749px;top:558px;color:#222;font-size:11px;letter-spacing:0">Mostly su...</div>
<div class="t" style="left:909px;top:558px;color:#222;font-size:9.500px;letter-spacing:0">ENG</div>
<div class="t" style="left:938px;top:558px;color:#222;font-size:9.500px;letter-spacing:0">10:56 AM</div>
<div style="left:6px;top:417px;width:16px;text-align:center;font:bold 17px/17px 'Liberation Serif',serif;color:#e8e8e8">T</div>
</body></html>
